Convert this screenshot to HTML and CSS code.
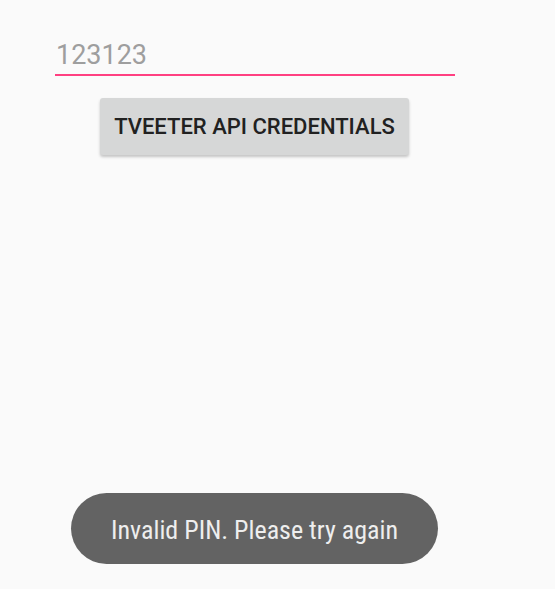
FILE: index.html
```html
<!DOCTYPE html>
<html>
<head>
<meta charset="utf-8">
<link rel="stylesheet" href="styles.css">
</head>
<body>
<div class="screen">
  <div class="field">
    <div class="field-text">123123</div>
  </div>
  <div class="btn-row">
    <button class="btn">TVEETER API CREDENTIALS</button>
  </div>
  <div class="spacer"></div>
  <div class="toast-row">
    <div class="toast">Invalid PIN. Please try again</div>
  </div>
</div>
</body>
</html>
```
FILE: styles.css
```css
html, body {
  margin: 0;
  padding: 0;
  background: #fafafa;
}
.screen {
  width: 555px;
  height: 589px;
  display: flex;
  flex-direction: column;
  font-family: Roboto, "Noto Sans", sans-serif;
}
.field {
  margin: 36px 0 0 55px;
  width: 400px;
  border-bottom: 2px solid #ff4081;
}
.field-text {
  font-size: 27px;
  line-height: 38px;
  color: #9e9e9e;
  padding-left: 1px;
}
.btn-row {
  display: flex;
  margin-top: 22px;
  padding-left: 100px;
}
.btn {
  width: 309px;
  height: 57px;
  border: none;
  border-radius: 3px;
  background: #d6d7d7;
  box-shadow: 0 2px 3px rgba(0,0,0,0.22);
  font-family: Roboto, sans-serif;
  font-weight: 500;
  font-size: 22px;
  color: #212121;
  padding: 0;
}
.spacer {
  flex: 1;
}
.toast-row {
  display: flex;
  padding-left: 71px;
  margin-bottom: 25px;
}
.toast {
  width: 367px;
  height: 71px;
  border-radius: 36px;
  background: #636363;
  color: #eeeeee;
  font-family: "Roboto Condensed", Roboto, sans-serif;
  font-size: 26px;
  padding-top: 2px;
  box-sizing: border-box;
  display: flex;
  align-items: center;
  justify-content: center;
}
```
